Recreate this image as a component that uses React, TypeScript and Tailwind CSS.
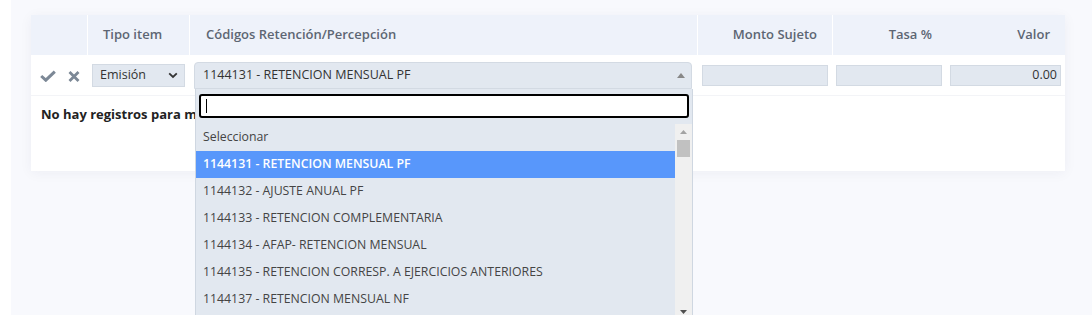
import React from 'react';

const options = [
  '1144131 - RETENCION MENSUAL PF',
  '1144132 - AJUSTE ANUAL PF',
  '1144133 - RETENCION COMPLEMENTARIA',
  '1144134 - AFAP- RETENCION MENSUAL',
  '1144135 - RETENCION CORRESP. A EJERCICIOS ANTERIORES',
  '1144137 - RETENCION MENSUAL NF',
];

function CheckIcon() {
  return (
    <svg width="16" height="12" viewBox="0 0 16 12" className="text-[#7c8896]">
      <path d="M1.2 6 L5.8 10.2 L14.8 1.6" fill="none" stroke="currentColor" strokeWidth="3" />
    </svg>
  );
}

function CrossIcon() {
  return (
    <svg width="12" height="11" viewBox="0 0 12 11" className="text-[#7c8896]">
      <path d="M1.5 1 L10.5 10 M10.5 1 L1.5 10" fill="none" stroke="currentColor" strokeWidth="2.8" />
    </svg>
  );
}

export default function App() {
  return (
    <div className="w-[1092px] h-[320px] bg-white overflow-hidden" style={{ fontFamily: '"Open Sans", "Noto Sans", sans-serif' }}>
      <div className="ml-[11px] h-[315px] bg-[#f8f9fd] pt-[15px] pl-[20px] overflow-hidden">
        <div className="relative w-[1034px] h-[156px] bg-white shadow-[0_2px_12px_rgba(30,40,70,0.05)]">
          {/* header */}
          <div className="flex h-[40px] bg-[#eef2fa] text-[13px] font-semibold text-[#5d6673]">
            <div className="w-[57px] border-r border-white" />
            <div className="w-[102px] border-r border-white flex items-center pl-[15px]">Tipo item</div>
            <div className="w-[508px] border-r border-white flex items-center pl-[16px]">Códigos Retención/Percepción</div>
            <div className="w-[135px] border-r border-white flex items-center justify-end pr-[15px]">Monto Sujeto</div>
            <div className="w-[113px] flex items-center justify-end pr-[14px]">Tasa %</div>
            <div className="w-[119px] flex items-center justify-end pr-[15px]">Valor</div>
          </div>

          {/* edit row */}
          <div className="flex h-[41px] items-center border-b border-[#f3f4f7]">
            <div className="w-[57px] flex items-center gap-[12px] pl-[9px] pt-[2px]">
              <CheckIcon />
              <CrossIcon />
            </div>
            <div className="w-[102px] pl-[4px]">
              <div className="w-[93px] h-[23px] bg-[#e2e8f0] border border-[#d3dae3] flex items-center justify-between pl-[7px] pr-[6px] text-[12.5px] text-[#333]">
                <span>Emisión</span>
                <svg width="10" height="7" viewBox="0 0 10 7">
                  <path d="M1.2 1.3 L5 5 L8.8 1.3" fill="none" stroke="#333" strokeWidth="1.8" />
                </svg>
              </div>
            </div>
            <div className="w-[508px] pl-[4px] self-start pt-[7px]">
              <div className="w-[498px] h-[27px] bg-[#e2e8f0] border border-[#d3dae3] rounded-t-[4px] flex items-center justify-between pl-[8px] pr-[6px] text-[12.5px] text-[#333]">
                <span>1144131 - RETENCION MENSUAL PF</span>
                <svg width="8" height="5" viewBox="0 0 8 5">
                  <path d="M0 5 L4 0 L8 5 Z" fill="#888" />
                </svg>
              </div>
            </div>
            <div className="w-[135px] pl-[4px]">
              <div className="w-[126px] h-[21px] bg-[#e2e8f0] border border-[#d3dae3]" />
            </div>
            <div className="w-[113px] pl-[3px]">
              <div className="w-[106px] h-[21px] bg-[#e2e8f0] border border-[#d3dae3]" />
            </div>
            <div className="w-[119px] pl-[4px]">
              <div className="w-[111px] h-[21px] bg-[#e2e8f0] border border-[#d3dae3] flex items-center justify-end pr-[3px] text-[12.5px] text-[#333]">0.00</div>
            </div>
          </div>

          <div className="pl-[10px] pt-[9px] text-[13px] font-bold text-[#222]">No hay registros para mostrar</div>

          {/* dropdown panel */}
          <div className="absolute left-[164px] top-[74px] w-[498px] h-[226px] bg-[#e2e8f0] border-l border-r border-[#cfd7e1] flex flex-col">
            <div className="px-[3px] pt-[5px] pb-[6px]">
              <div className="h-[24px] bg-white border-2 border-black rounded-[3px] flex items-center pl-[5px]">
                <div className="w-[1px] h-[14px] bg-black" />
              </div>
            </div>
            <div className="flex flex-1 min-h-0">
              <div className="flex-1 overflow-hidden text-[12.3px] text-[#444]">
                <div className="h-[27px] flex items-center pl-[7px]">Seleccionar</div>
                {options.map((o, i) => (
                  <div
                    key={o}
                    className={i === 0 ? 'h-[27px] flex items-center pl-[7px] bg-[#5897fb] text-white font-semibold' : 'h-[27px] flex items-center pl-[7px]'}
                  >
                    {o}
                  </div>
                ))}
              </div>
              <div className="w-[17px] bg-[#f0f0f0] flex flex-col items-center pt-[6px]">
                <svg width="7" height="4" viewBox="0 0 7 4">
                  <path d="M0 4 L3.5 0 L7 4 Z" fill="#a3a3a3" />
                </svg>
                <div className="mt-[6px] w-[13px] h-[17px] bg-[#c1c1c1]" />
                <div className="flex-1" />
                <svg width="7" height="4" viewBox="0 0 7 4" className="mb-[1px]">
                  <path d="M0 0 L7 0 L3.5 4 Z" fill="#505050" />
                </svg>
              </div>
            </div>
          </div>
        </div>
      </div>
    </div>
  );
}
